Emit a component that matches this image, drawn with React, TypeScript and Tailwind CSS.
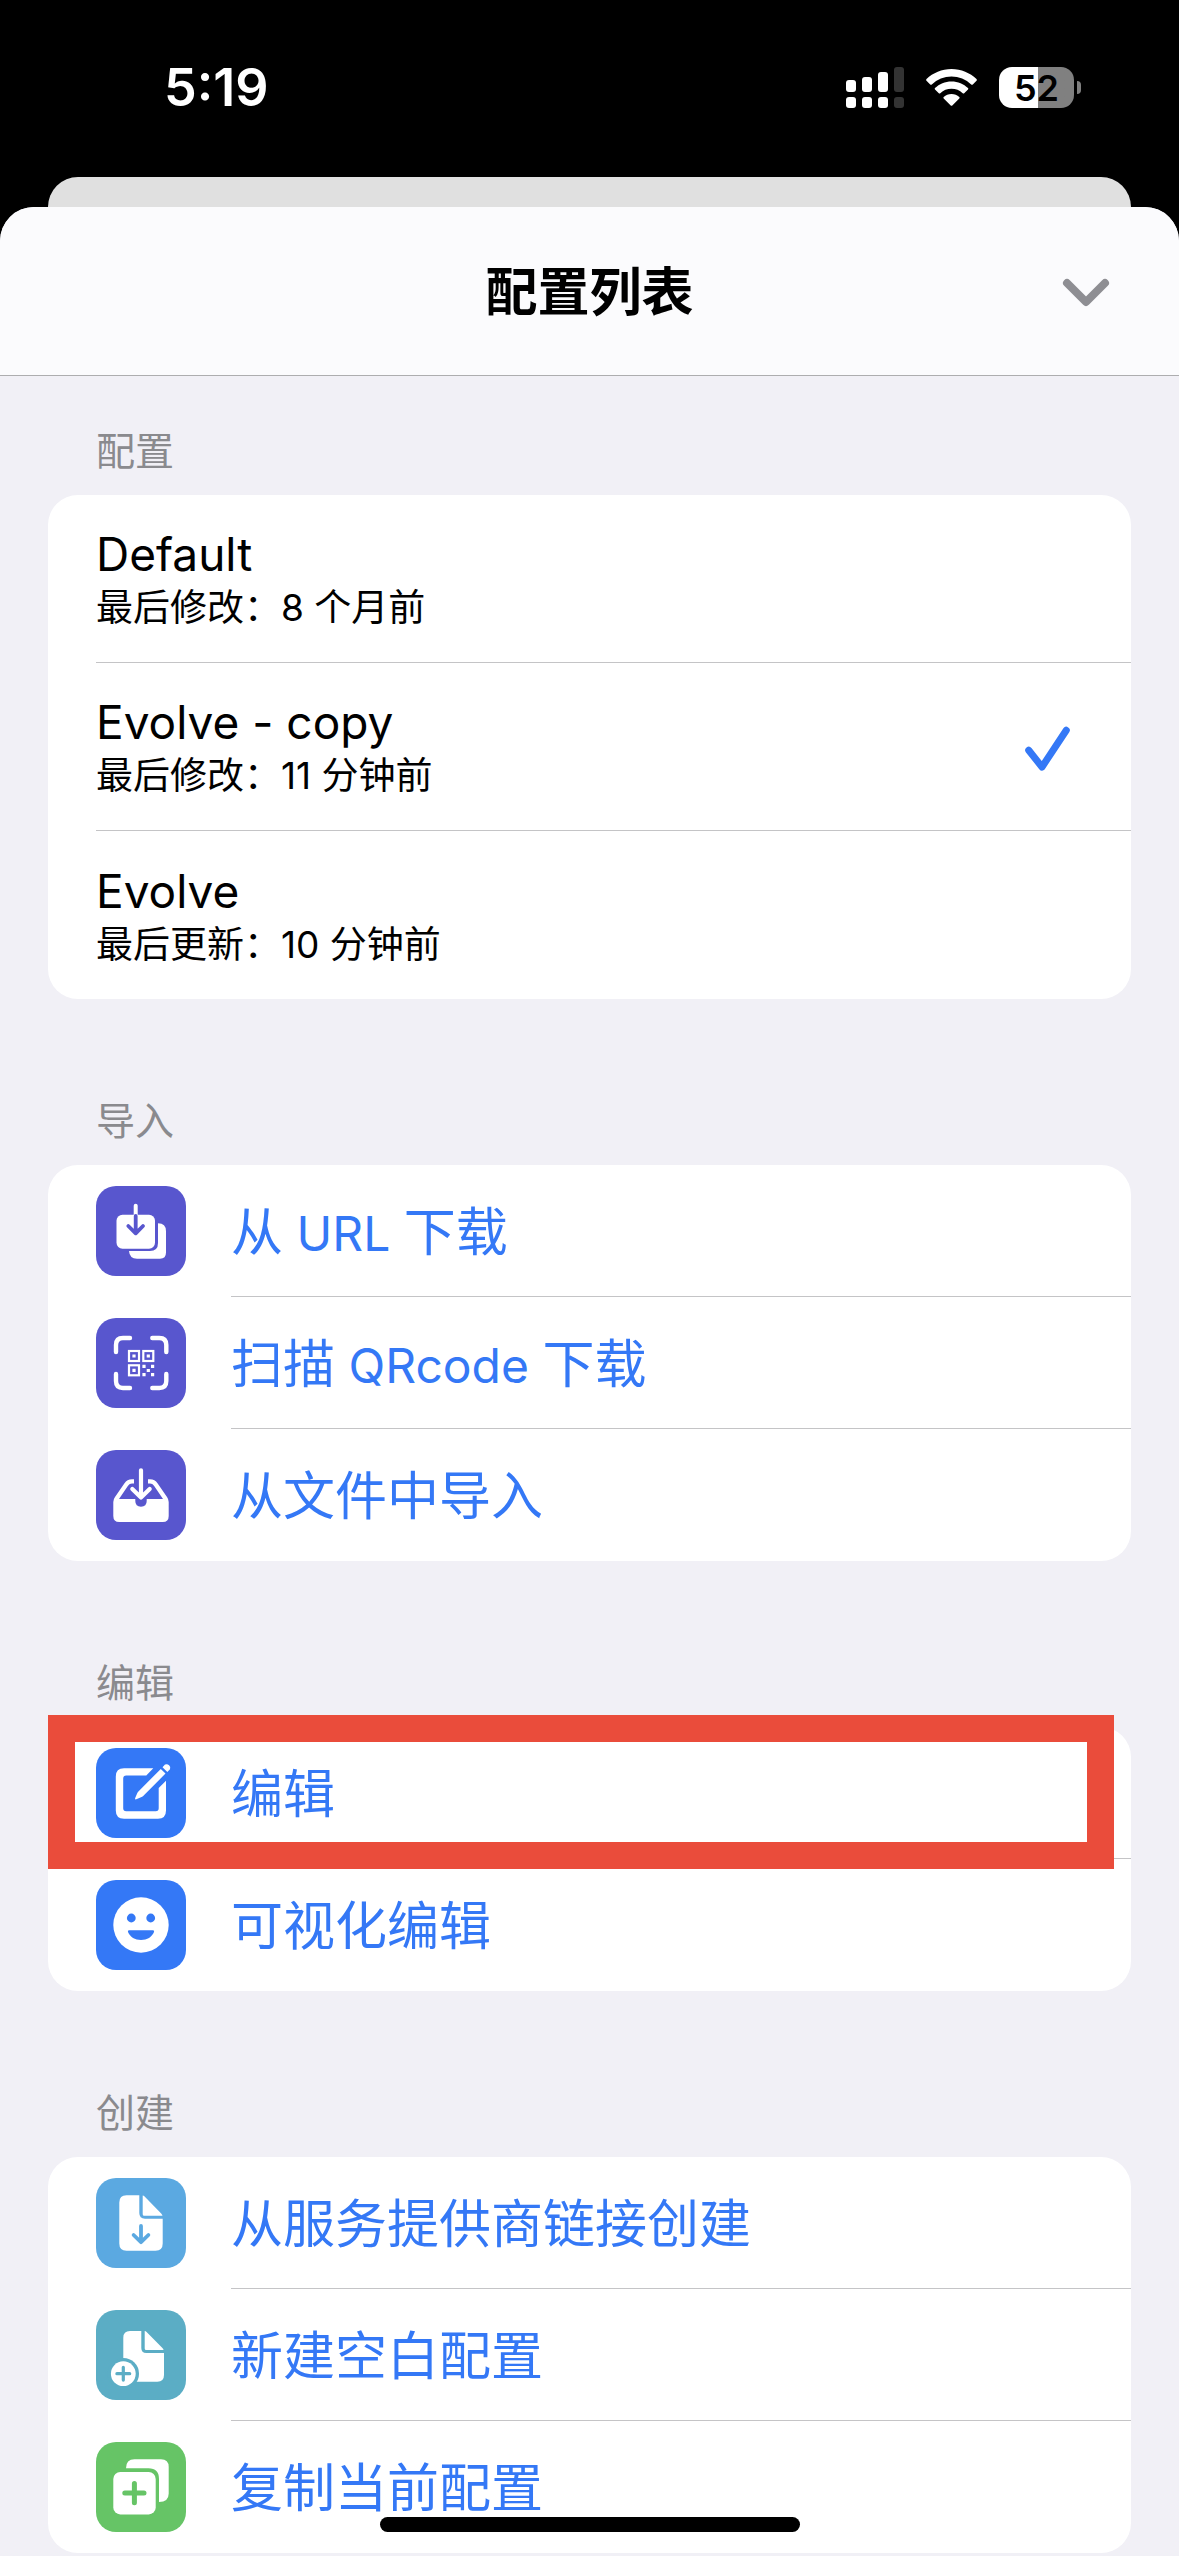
import type { ReactNode } from "react";

type Profile = { name: string; detail: string; selected?: boolean };
type Action = { id: string; label: ReactNode; tile: string; icon: ReactNode; highlighted?: boolean };

const profiles: Profile[] = [
  { name: "Default", detail: "最后修改：8 个月前" },
  { name: "Evolve - copy", detail: "最后修改：11 分钟前", selected: true },
  { name: "Evolve", detail: "最后更新：10 分钟前" },
];

function Glyph({ children }: { children: ReactNode }) {
  return (
    <svg viewBox="0 0 90 90" className="size-full" fill="none" strokeLinecap="round" strokeLinejoin="round" aria-hidden="true">
      {children}
    </svg>
  );
}

/* Latin words sit slightly smaller than the Chinese characters around them. */
function Latin({ children }: { children: string }) {
  return <span className="text-[48px] whitespace-pre">{children}</span>;
}

const LinkDownloadIcon = (
  <Glyph>
    <path fill="#fff" d="M62 37.3Q70 37.3 70 45.3V66.5Q70 72.7 64 72.7H41Q33.5 72.7 33 65H54Q62 65 62 57Z" />
    <rect x="20.5" y="28.7" width="38.5" height="34" rx="6" fill="#fff" />
    <path d="M39.7 19.8V29" stroke="#fff" strokeWidth="4" />
    <path d="M39.7 30V47M32.3 40L39.7 47.3L47 40" stroke="#5856ce" strokeWidth="3.8" />
  </Glyph>
);

const QrIcon = (
  <Glyph>
    <path
      d="M20 34V27Q20 20 27 20H34M56.3 20H63.3Q70.3 20 70.3 27V34M70.3 56V63Q70.3 70 63.3 70H56.3M34 70H27Q20 70 20 63V56"
      stroke="#fff"
      strokeWidth="4.4"
    />
    <g stroke="#fff" strokeWidth="2.2" strokeLinejoin="miter">
      <rect x="33" y="33" width="10" height="10" />
      <rect x="47.3" y="33" width="10" height="10" />
      <rect x="33" y="47.3" width="10" height="10" />
    </g>
    <path
      fill="#fff"
      d="M36.4 36.4h3.2v3.2h-3.2zM50.7 36.4h3.2v3.2h-3.2zM36.4 50.7h3.2v3.2h-3.2zM46.4 46.7h3.2v3.2h-3.2zM55 46.7h3.2v3.2H55zM50.7 50.9h3.2v3.2h-3.2zM46.4 55h3.2v3.2h-3.2zM55 55h3.2v3.2H55z"
    />
  </Glyph>
);

const TrayIcon = (
  <Glyph>
    <path
      fill="#fff"
      d="M38 29.3H36Q31 29.3 28.5 33.2L19 47Q17.3 49.3 17.3 52V66Q17.3 72 23.3 72H66.7Q72.7 72 72.7 66V52Q72.7 49.3 71 47L61.5 33.2Q59 29.3 54 29.3H52V33.6H54Q56.5 33.6 58 35.7L67 49H50.7V51Q50.7 56.7 45 56.7T39.3 51V49H23L32 35.7Q33.5 33.6 36 33.6H38Z"
    />
    <path d="M45 20.3V46.5M36.3 39L45 47.5L53.7 39" stroke="#fff" strokeWidth="4.2" />
  </Glyph>
);

const EditIcon = (
  <Glyph>
    <path
      fill="#fff"
      d="M57.3 20.3H28Q19.8 20.3 19.8 28.5V62.5Q19.8 70.7 28 70.7H62Q70 70.7 70 62.5V32.7L62.7 40V60.3Q62.7 63.3 59.7 63.3H30.2Q27.2 63.3 27.2 60.3V30.6Q27.2 27.6 30.2 27.6H50.3Z"
    />
    <path fill="#fff" d="M64.8 20.9L69.5 25.6L47.2 47.9Q46.3 48.7 45 49.3L40.3 51.3Q38.6 51.7 39.2 50L41 45.7Q41.5 44.4 42.4 43.5Z" />
    <path fill="#fff" d="M66.5 19.2L69 16.6A3.7 3.7 0 0 1 74 21.3L71.3 23.9Z" />
  </Glyph>
);

const SmileIcon = (
  <Glyph>
    <circle cx="45" cy="45" r="27.7" fill="#fff" />
    <circle cx="35.3" cy="38" r="4.4" fill="#3478f6" />
    <circle cx="54.7" cy="38" r="4.4" fill="#3478f6" />
    <path fill="#3478f6" d="M33 50.3H57Q58.6 50.3 58 52C56 57 51 60 45 60S34 57 32 52Q31.4 50.3 33 50.3Z" />
  </Glyph>
);

const DocDownloadIcon = (
  <Glyph>
    <path fill="#fff" d="M30.5 17.3H43.3V35Q43.3 40.7 49 40.7H66.7V65.5Q66.7 72.7 59.5 72.7H30.5Q23.3 72.7 23.3 65.5V24.5Q23.3 17.3 30.5 17.3Z" />
    <path fill="#fff" d="M46.7 17.5Q47.8 17.6 48.6 18.4L65.2 35.4Q66.3 36.5 66.5 37.7H48.2Q46.7 37.7 46.7 36.2Z" />
    <path d="M45 48V64M37.6 57L45 64.2L52.4 57" stroke="#5ba9e1" strokeWidth="3.8" />
  </Glyph>
);

const DocAddIcon = (
  <Glyph>
    <path fill="#fff" d="M34 21H45.3V38Q45.3 43 50.3 43H68V65Q68 71.7 61.3 71.7H27.3V27.7Q27.3 21 34 21Z" />
    <path fill="#fff" d="M48.7 21Q49.8 21.2 50.6 22L66.4 37.9Q67.4 38.9 67.6 40H50.2Q48.7 40 48.7 38.5Z" />
    <circle cx="27.3" cy="63.7" r="15.7" fill="#5badc5" />
    <circle cx="27.3" cy="63.7" r="12.4" fill="#fff" />
    <path d="M27.3 57.3V70.1M20.9 63.7H33.7" stroke="#5badc5" strokeWidth="3.2" />
  </Glyph>
);

const DuplicateIcon = (
  <Glyph>
    <path fill="#fff" d="M30 26.3Q30 17.3 38.5 17.3H65Q72.7 17.3 72.7 25V51.5Q72.7 60 63 60V37Q63 26.3 52.5 26.3Z" />
    <rect x="17.3" y="30" width="42.4" height="42.4" rx="7" fill="#fff" />
    <path d="M38.4 41.5V60.7M28.8 51.1H48" stroke="#66c466" strokeWidth="5" />
  </Glyph>
);

const groups: { title: string; actions: Action[] }[] = [
  {
    title: "导入",
    actions: [
      { id: "url", label: <>从<Latin>{" URL "}</Latin>下载</>, tile: "bg-[#5856ce]", icon: LinkDownloadIcon },
      { id: "qr", label: <>扫描<Latin>{" QRcode "}</Latin>下载</>, tile: "bg-[#5856ce]", icon: QrIcon },
      { id: "file", label: "从文件中导入", tile: "bg-[#5856ce]", icon: TrayIcon },
    ],
  },
  {
    title: "编辑",
    actions: [
      { id: "edit", label: "编辑", tile: "bg-[#3478f6]", icon: EditIcon, highlighted: true },
      { id: "visual", label: "可视化编辑", tile: "bg-[#3478f6]", icon: SmileIcon },
    ],
  },
  {
    title: "创建",
    actions: [
      { id: "provider", label: "从服务提供商链接创建", tile: "bg-[#5ba9e1]", icon: DocDownloadIcon },
      { id: "blank", label: "新建空白配置", tile: "bg-[#5badc5]", icon: DocAddIcon },
      { id: "copy", label: "复制当前配置", tile: "bg-[#66c466]", icon: DuplicateIcon },
    ],
  },
];

function StatusBar() {
  return (
    <div className="flex h-[177px] items-start justify-between pt-[67px] pr-[98px] pl-[164px] text-white">
      <span className="text-[52px] leading-[42px] font-semibold">5:19</span>
      <div className="flex items-center gap-[22px]">
        <svg width="58" height="41" viewBox="0 0 58 41" fill="#fff" aria-hidden="true">
          <rect y="13" width="10" height="12" rx="3" />
          <rect x="16" y="10" width="10" height="15" rx="3" />
          <rect x="32" y="5" width="10" height="20" rx="3" />
          <rect x="48" width="10" height="25" rx="3" fill="#333" />
          <rect y="30" width="10" height="11" rx="3" />
          <rect x="16" y="30" width="10" height="11" rx="3" />
          <rect x="32" y="30" width="10" height="11" rx="3" />
          <rect x="48" y="30" width="10" height="11" rx="3" fill="#333" />
        </svg>
        <svg width="51" height="37" viewBox="0 0 51 37" fill="#fff" aria-hidden="true">
          <path d="M25.5 0C35.2 0 44 3.8 50.5 10.1Q51.2 10.9 50.5 11.7L46.8 15.4Q46 16.1 45.2 15.4A28.3 28.3 0 0 0 5.8 15.4Q5 16.1 4.2 15.4L.5 11.7Q-.2 10.9 .5 10.1C7 3.8 15.8 0 25.5 0Z" />
          <path d="M25.5 12.4C31.9 12.4 37.7 14.9 42 19Q42.7 19.8 42 20.5L38.2 24.2Q37.5 24.9 36.7 24.2A16.2 16.2 0 0 0 14.3 24.2Q13.5 24.9 12.8 24.2L9 20.5Q8.3 19.8 9 19C13.3 14.9 19.1 12.4 25.5 12.4Z" />
          <path d="M25.5 25C28.5 25 31.2 26.1 33.3 27.9Q34 28.7 33.3 29.4L26.3 36.4Q25.5 37.1 24.7 36.4L17.7 29.4Q17 28.7 17.7 27.9C19.8 26.1 22.5 25 25.5 25Z" />
        </svg>
        <div className="flex items-center gap-[3px]">
          <span className="flex h-[41px] w-[75px] items-center justify-center rounded-[13px] bg-linear-to-r from-white from-52% to-[#808080] to-52% text-[36px] leading-none font-semibold text-black">
            52
          </span>
          <span className="h-[13px] w-1 rounded-r-full bg-[#808080]" />
        </div>
      </div>
    </div>
  );
}

function SectionTitle({ children }: { children: ReactNode }) {
  return <h2 className="px-12 pb-4 text-[39px] leading-[56px] text-[#8a8a8e]">{children}</h2>;
}

function ProfileRow({ profile, last }: { profile: Profile; last: boolean }) {
  return (
    <li className="pl-12">
      <button
        type="button"
        aria-pressed={!!profile.selected}
        className={`flex h-[168px] w-full items-center justify-between pt-[3px] pr-[61px] text-left ${last ? "" : "border-b border-[#c4c4c6]"}`}
      >
        <span className="flex flex-col">
          <span className="text-[46px] leading-[56px]">{profile.name}</span>
          <span className="text-[37px] leading-[52px]">{profile.detail}</span>
        </span>
        {profile.selected && (
          <svg width="45" height="45" viewBox="0 0 45 45" fill="none" stroke="#3478f6" strokeWidth="7" strokeLinecap="round" strokeLinejoin="round" aria-hidden="true">
            <path d="M3.7 24.3L17 41L41.3 4.3" />
          </svg>
        )}
      </button>
    </li>
  );
}

function ActionRow({ action, last }: { action: Action; last: boolean }) {
  return (
    <li className="relative">
      <button type="button" className="flex h-[132px] w-full gap-[45px] pl-12 text-left">
        <span className={`my-[21px] size-[90px] shrink-0 rounded-[20px] ${action.tile}`}>{action.icon}</span>
        <span className={`flex flex-1 items-center self-stretch pt-1 text-[52px] leading-none text-[#3478f6] ${last ? "" : "border-b border-[#c4c4c6]"}`}>
          <span>{action.label}</span>
        </span>
      </button>
      {action.highlighted && (
        <span className="pointer-events-none absolute -top-3 right-[17px] -bottom-2.5 left-0 border-[27px] border-[#ea4c3b]" />
      )}
    </li>
  );
}

export default function App() {
  return (
    <div className="relative flex min-h-screen flex-col bg-black font-[Inter,'Noto_Sans_CJK_SC',sans-serif] text-black" lang="zh-CN">
      <StatusBar />
      <div className="mx-12 h-[30px] rounded-t-[30px] bg-[#e0e0e0]" />
      <main className="flex flex-1 flex-col overflow-hidden rounded-t-[34px] bg-[#f1f0f6]">
        <header className="grid h-[169px] grid-cols-[1fr_auto_1fr] items-center border-b border-[#adadaf] bg-[#fbfbfd] px-[69px] pt-[3px]">
          <h1 className="col-start-2 text-[52px] leading-[72px] font-bold">配置列表</h1>
          <button type="button" aria-label="关闭" className="justify-self-end">
            <svg width="48" height="30" viewBox="0 0 48 30" fill="none" stroke="#8e8e93" strokeWidth="8" strokeLinecap="round" strokeLinejoin="round" aria-hidden="true">
              <path d="M5 5L24 24L43 5" />
            </svg>
          </button>
        </header>
        <div className="flex flex-col gap-[94px] px-12 pt-[47px] pb-[3px]">
          <section>
            <SectionTitle>配置</SectionTitle>
            <ul className="rounded-[30px] bg-white">
              {profiles.map((p, i) => (
                <ProfileRow key={p.name} profile={p} last={i === profiles.length - 1} />
              ))}
            </ul>
          </section>
          {groups.map((g) => (
            <section key={g.title}>
              <SectionTitle>{g.title}</SectionTitle>
              <ul className="rounded-[30px] bg-white">
                {g.actions.map((a, i) => (
                  <ActionRow key={a.id} action={a} last={i === g.actions.length - 1} />
                ))}
              </ul>
            </section>
          ))}
        </div>
      </main>
      <div className="absolute bottom-6 left-1/2 h-[15px] w-[420px] -translate-x-1/2 rounded-full bg-black" />
    </div>
  );
}
